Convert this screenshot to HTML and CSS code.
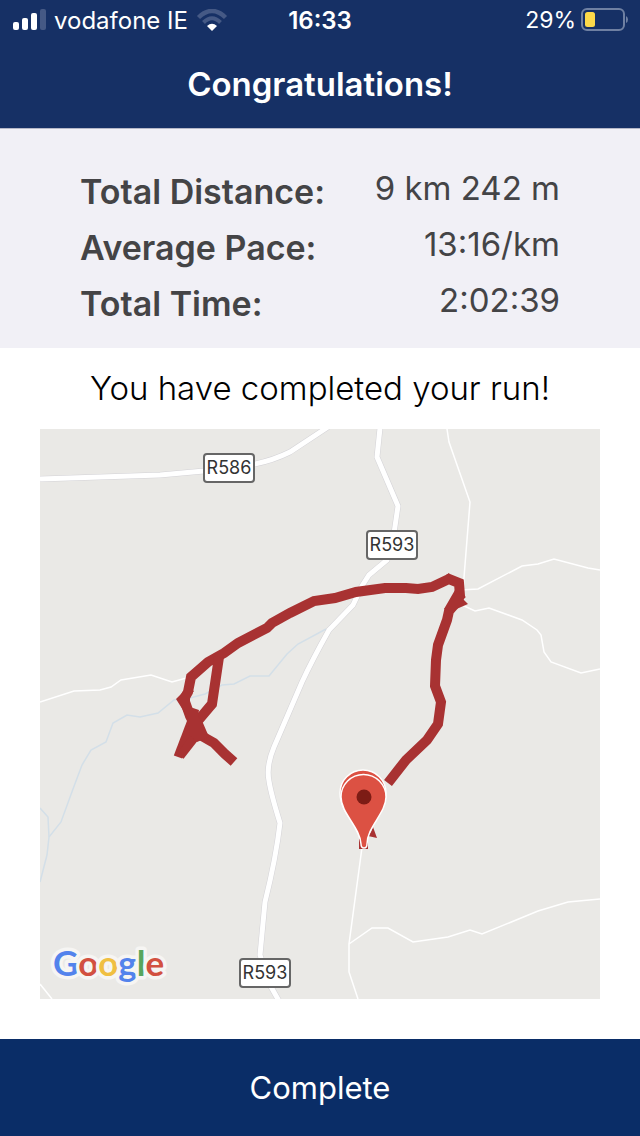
FILE: index.html
```
<!DOCTYPE html>
<html lang="en">
<head>
  <meta charset="UTF-8" />
  <meta name="viewport" content="width=device-width, initial-scale=1.0"/>
  <title>Congratulations!</title>
  <link rel="stylesheet" href="styles.css">
</head>
<body>
  <header class="header">
    <div class="status-bar">
      <div class="status-left">
        <svg class="signal" width="34" height="22" viewBox="0 0 34 22" aria-hidden="true">
          <rect x="1" y="13" width="6" height="8" rx="2" fill="#fff"/>
          <rect x="10" y="9" width="6" height="12" rx="2" fill="#fff"/>
          <rect x="19" y="4" width="6" height="17" rx="2" fill="#fff"/>
          <rect x="28" y="0" width="6" height="21" rx="2" fill="#455985"/>
        </svg>
        <span>vodafone IE</span>
        <svg class="wifi" width="32" height="22" viewBox="0 0 32 22" aria-hidden="true">
          <path d="M2.500 8.500Q16 -4.500 29.500 8.500" fill="none" stroke="#455985" stroke-width="4.500"/>
          <path d="M7.500 13.500Q16 5 24.500 13.500" fill="none" stroke="#455985" stroke-width="4"/>
          <path d="M11 17Q16 12.500 21 17L16 22Z" fill="#fff"/>
        </svg>
      </div>
      <span class="status-time">16:33</span>
      <div class="status-right">
        <span>29%</span>
        <svg class="battery" width="48" height="24" viewBox="0 0 48 24" aria-hidden="true">
          <rect x="2" y="1" width="42" height="21" rx="5" fill="none" stroke="#6f80a2" stroke-width="2"/>
          <rect x="5" y="4" width="10" height="15" rx="2.500" fill="#fcd94a"/>
          <path d="M46 8Q48 9 48 11.500T46 15Z" fill="#6f80a2"/>
        </svg>
      </div>
    </div>
    <h1>Congratulations!</h1>
  </header>

  <dl class="stats">
    <dt>Total Distance:</dt>
    <dd>9 km 242 m</dd>
    <dt>Average Pace:</dt>
    <dd>13:16/km</dd>
    <dt>Total Time:</dt>
    <dd>2:02:39</dd>
  </dl>

  <main class="content">
    <p class="message">You have completed your run!</p>

    <svg class="map" viewBox="40 429 560 570" role="img" aria-label="Map of your run">
      <!-- streams -->
      <g class="stream">
        <path d="M326 629L298 644L287 654L269 676L250 676L234 684L222 685L205 694L190 698L174 700L158 713L140 717L127 715L113 723L106 742L91 750L82 765L73 789L61 822L49 837L47 855L40 882"/>
        <path d="M40 808L48 817L49 837"/>
      </g>

      <!-- minor roads -->
      <g class="lane">
        <path d="M40 702L74 691L100 690L111 687L121 680L151 675L172 682L190 677"/>
        <path d="M447 429L449 442L470 502L463 590"/>
        <path d="M460 590L478 589L522 566L538 564L554 559L588 568L600 570"/>
        <path d="M462 605L475 611L489 608L522 620L537 630L541 635L544 652L551 662L581 673L600 669"/>
        <path d="M363 840L349 944V972L358 999"/>
        <path d="M349 944L372 928H388L413 942L448 937L470 930L482 934L538 911L568 902L600 899"/>
        <path d="M40 984L52 999"/>
      </g>

      <!-- regional roads -->
      <g class="road-edge">
        <path d="M40 479L160 475L204 471C240 467 264 465 290 452L328 427"/>
        <path d="M380 428L377 457L398 506L393 540L387 560L369 575L362 586L353 605L329 630C315 655 308 669 302 682L274 747Q266 766 269 781Q271 794 280 823Q276 858 265 902L260 955L270 985L279 1001"/>
      </g>
      <g class="road">
        <path d="M40 479L160 475L204 471C240 467 264 465 290 452L328 427"/>
        <path d="M380 428L377 457L398 506L393 540L387 560L369 575L362 586L353 605L329 630C315 655 308 669 302 682L274 747Q266 766 269 781Q271 794 280 823Q276 858 265 902L260 955L270 985L279 1001"/>
      </g>

      <g class="shield">
        <rect x="204" y="454" width="50" height="28" rx="3"/>
        <text x="229" y="474">R586</text>
        <rect x="367" y="531" width="50" height="28" rx="3"/>
        <text x="392" y="551">R593</text>
        <rect x="240" y="959" width="50" height="28" rx="3"/>
        <text x="265" y="979">R593</text>
      </g>

      <!-- the run -->
      <g class="track">
        <path d="M234 762L225 754L214 743L200 735L190 716L184 699L188 692L191 677L208 662L224 653L238 643L267 628L272 623L290 613L314 601L335 598L356 592L385 588L406 588L418 589L432 587L449 579L459 583L460 596L455 604L449 611L447 620L438 645L436 660L435 686L441 702L438 724L427 740L406 760L388 783"/>
        <path d="M219 657L212 704L196 723"/>
        <path class="thin" d="M194 715L178 757"/>
        <path class="thin" d="M198 733L180 756"/>
      </g>
      <path class="track-fill" d="M176 699L187 688L194 691L190 696V707L199 710L198 716L203 723L209 737L197 742L190 736L188 718ZM444 609L455 590L466 597L463 599L468 604L452 611ZM446 575L449 573L450 577ZM371 832L373 827L377 838L368 836ZM359 836H368V849H359Z"/>

      <!-- finish pin over the start pin -->
      <g class="pin">
        <path d="M363 843C361 828 340 813 340 793A23 23 0 0 1 386 793C386 813 365 828 363 843Z"/>
        <path d="M364 848Q361 848 361 844C360 827 341 813 341 797A22.500 22.500 0 0 1 386 797C386 813 367 827 367 844Q367 848 364 848Z"/>
        <circle cx="364" cy="797" r="7.500"/>
      </g>

      <text class="google" x="53" y="976"><tspan class="blue">G</tspan><tspan class="red">o</tspan><tspan class="yellow">o</tspan><tspan class="blue">g</tspan><tspan class="green">l</tspan><tspan class="red">e</tspan></text>
    </svg>
  </main>

  <button class="complete" type="button">Complete</button>
</body>
</html>
```
FILE: styles.css
```
* {
  box-sizing: border-box;
}

body {
  margin: 0;
  min-height: 100vh;
  display: flex;
  flex-direction: column;
  background-color: #fff;
  font-family: Inter, 'Liberation Sans', sans-serif;
}

.header {
  background-color: #163065;
  border-bottom: 1px solid #b5b7c8;
  color: #fff;
}

.status-bar {
  display: grid;
  grid-template-columns: 1fr auto 1fr;
  align-items: center;
  height: 40px;
  padding: 0 12px;
  font-size: 24px;
}

.status-left,
.status-right {
  display: flex;
  align-items: center;
  gap: 8px;
}

.status-right {
  justify-content: flex-end;
  gap: 4px;
  font-size: 23px;
}

.status-time {
  font-weight: 600;
}

h1 {
  margin: 0;
  font-size: 33px;
  font-weight: 600;
  line-height: 88px;
  text-align: center;
}

.stats {
  display: grid;
  grid-template-columns: auto auto;
  grid-auto-rows: 56px;
  margin: 0;
  padding: 35px 80px 16px;
  background-color: #f1f0f6;
  color: #444446;
}

.stats dt {
  font-size: 34px;
  font-weight: 600;
  line-height: 56px;
}

.stats dd {
  margin: 0;
  font-size: 33px;
  line-height: 48px;
  text-align: right;
}

.content {
  flex: 1;
  padding: 0 40px 40px;
}

.message {
  margin: 0;
  color: #000;
  font-size: 33px;
  font-weight: 300;
  line-height: 81px;
  text-align: center;
}

.map {
  display: block;
  width: 100%;
  background-color: #eae9e6;
}

.stream {
  fill: none;
  stroke: #d3dfe8;
  stroke-width: 1.5;
}

.lane {
  fill: none;
  stroke: #fff;
  stroke-width: 1.5;
}

.road-edge {
  fill: none;
  stroke: #d3d2d6;
  stroke-width: 6;
}

.road {
  fill: none;
  stroke: #fff;
  stroke-width: 5;
}

.shield rect {
  fill: #fff;
  stroke: #666;
  stroke-width: 2;
}

.shield text {
  fill: #333;
  font-size: 18px;
  text-anchor: middle;
}

.track {
  fill: none;
  stroke: #a83232;
  stroke-width: 10;
}

.track .thin {
  stroke-width: 9;
}

.track-fill {
  fill: #a83232;
}

.pin path {
  fill: #dc5143;
  stroke: #fff;
  stroke-width: 1.5;
}

.pin circle {
  fill: #7d1c15;
}

.google {
  font-family: Lato, sans-serif;
  font-size: 35px;
  font-weight: 700;
  stroke: #f6f5f3;
  stroke-width: 7;
  stroke-linejoin: round;
  paint-order: stroke;
}

.blue {
  fill: #5383ec;
}

.red {
  fill: #d25040;
}

.yellow {
  fill: #f0bf42;
}

.green {
  fill: #58a55c;
}

.complete {
  height: 97px;
  border: 0;
  background-color: #0a2d67;
  color: #fff;
  font-family: inherit;
  font-size: 31px;
  cursor: pointer;
}
```
